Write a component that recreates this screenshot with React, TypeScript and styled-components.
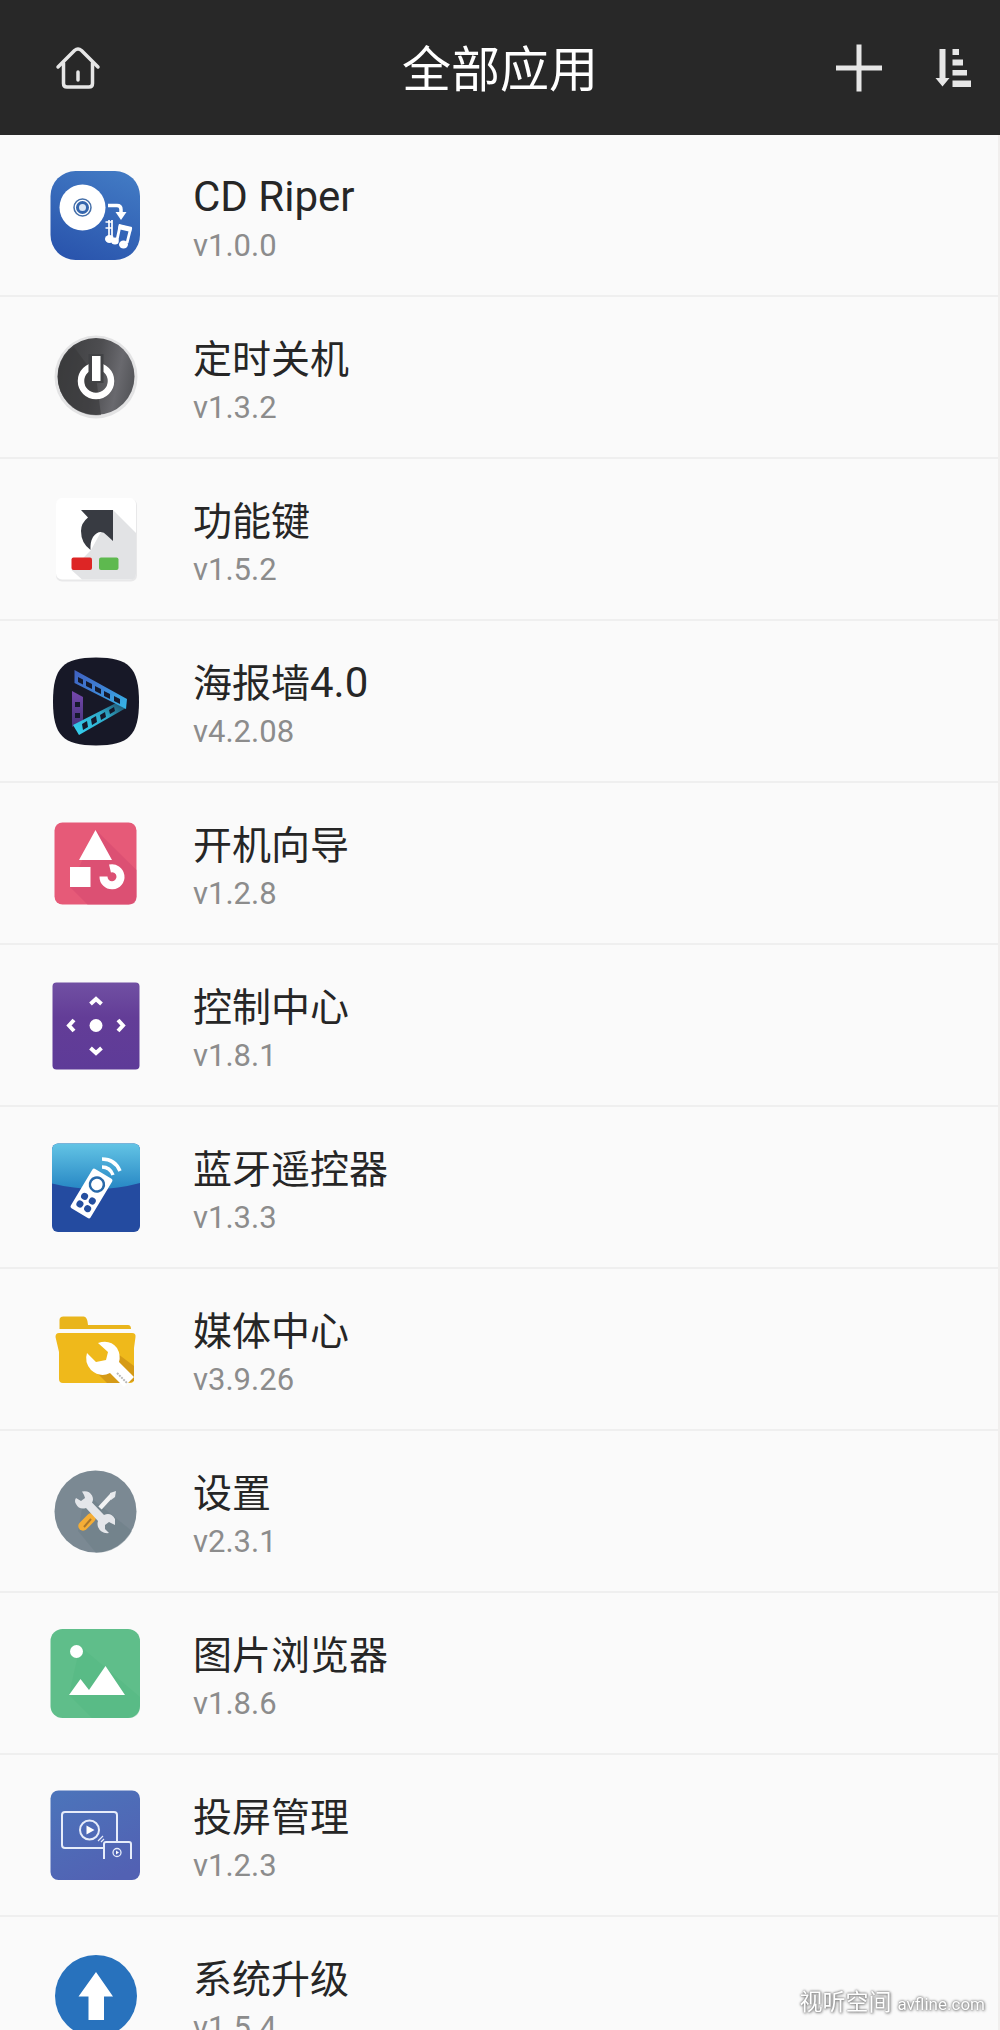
import React from "react";
import styled, { createGlobalStyle } from "styled-components";

const GlobalStyle = createGlobalStyle`
  * { box-sizing: border-box; }
  body {
    margin: 0;
    background: #fafafa;
    font-family: Roboto, "Noto Sans CJK SC", sans-serif;
  }
`;

const Screen = styled.div`
  display: flex;
  flex-direction: column;
  height: 100vh;
  overflow: hidden;
`;

const Header = styled.header`
  display: grid;
  grid-template-columns: 1fr auto 1fr;
  align-items: center;
  flex: none;
  height: 135px;
  padding: 0 19px 0 50px;
  background: #282828;
  color: #fff;
`;

const Title = styled.h1`
  margin: 0 31px 0 0;
  padding-top: 6px;
  font-size: 49px;
  font-weight: 400;
  line-height: 60px;
`;

const Actions = styled.div<{ $end?: boolean }>`
  display: flex;
  gap: 38px;
  justify-content: ${(p) => (p.$end ? "flex-end" : "flex-start")};
`;

const IconButton = styled.button`
  display: flex;
  width: 56px;
  height: 56px;
  padding: 0;
  border: 0;
  background: none;
  color: #e6e6e6;
  cursor: pointer;
`;

const AppList = styled.ul`
  flex: 1;
  min-height: 0;
  margin: 0;
  padding: 0;
  list-style: none;
  overflow-y: auto;
  scrollbar-width: none;
  border-right: 2px solid #f1efee;
`;

const AppItem = styled.li`
  border-bottom: 2px solid #efefef;
`;

const AppRow = styled.button`
  display: flex;
  align-items: center;
  gap: 53px;
  width: 100%;
  height: 160px;
  padding: 0 50px;
  border: 0;
  background: none;
  font-family: inherit;
  text-align: left;
  cursor: pointer;
`;

const AppIcon = styled.svg`
  flex: none;
  width: 90px;
  height: 90px;
`;

const AppText = styled.span`
  display: flex;
  flex-direction: column;
  padding-top: 8px;
`;

const AppName = styled.span`
  color: #262626;
  font-size: 39px;
  line-height: 54px;
`;

const Latin = styled.span`
  font-size: 42px;
  line-height: 1;
`;

const AppVersion = styled.span`
  color: #8c8c8c;
  font-size: 31px;
  line-height: 42px;
`;

const Watermark = styled.div`
  position: fixed;
  right: 15px;
  bottom: 10px;
  display: flex;
  align-items: baseline;
  gap: 6px;
  color: #fff;
  font-size: 23px;
  line-height: 32px;
  text-shadow: 0 0 2px #777, 0 0 3px #888, 1px 1px 3px #999;
  pointer-events: none;
`;

const WatermarkSite = styled.span`
  font-family: "Liberation Sans Narrow", Roboto, sans-serif;
  font-size: 17px;
`;

const HomeIcon = () => (
  <svg viewBox="0 0 56 56" fill="none" stroke="currentColor" strokeWidth="3.500" strokeLinecap="round" strokeLinejoin="round" aria-hidden="true">
    <path d="M8 27 24.500 10.500q3.500-3 7 0L48 27" />
    <path d="M13.500 23v20.500q0 3.500 3.500 3.500h22q3.500 0 3.500-3.500V23" />
    <path d="M28 32v8" />
  </svg>
);

const PlusIcon = () => (
  <svg viewBox="0 0 56 56" fill="none" stroke="currentColor" strokeWidth="5" aria-hidden="true">
    <path d="M28 4.500v47M5 28h46" />
  </svg>
);

const SortIcon = () => (
  <svg viewBox="0 0 56 56" fill="currentColor" aria-hidden="true">
    <path d="M14.500 9h6v29h4L17.500 46.500 10.500 38h4z" />
    <path d="M27.500 9h6.500v6h-6.500zM27.500 19.500H38v6H27.500zM27.500 30H42v5.500H27.500zM27.500 40.500H46V47H27.500z" />
  </svg>
);

const CdArt = () => (
  <>
    <defs>
      <linearGradient id="cd" x1="0.700" y1="0" x2="0.300" y2="1">
        <stop offset="0" stopColor="#4179c3" />
        <stop offset="1" stopColor="#2a55ad" />
      </linearGradient>
    </defs>
    <rect x="0.500" y="1" width="89.500" height="89" rx="25" fill="url(#cd)" />
    <circle cx="32.500" cy="37.500" r="23" fill="#fff" />
    <circle cx="32.500" cy="37.500" r="8.500" fill="none" stroke="#456fa9" strokeWidth="1.500" />
    <circle cx="32.500" cy="37.500" r="5" fill="#dce8f6" stroke="#3566ad" strokeWidth="3" />
    <path d="M58 35.500h9q4 0 4 4V44" fill="none" stroke="#fff" strokeWidth="3.500" />
    <path d="M65.500 42h11L71 50z" fill="#fff" />
    <path d="M59 68V50M55.500 52h7M55.500 58h7M62 50v17" fill="none" stroke="#fff" strokeWidth="1.700" />
    <ellipse cx="59.500" cy="69" rx="4.500" ry="4" fill="#fff" />
    <path d="M67 70 70 56l10.500 3L77 73" fill="none" stroke="#fff" strokeWidth="2.800" />
    <path d="m69 54 13 3-1 5-13-3z" fill="#fff" />
    <ellipse cx="65" cy="71" rx="3.800" ry="3.500" fill="#fff" />
    <ellipse cx="73.500" cy="74.500" rx="4.500" ry="4" fill="#fff" />
  </>
);

const PowerArt = () => (
  <>
    <defs>
      <linearGradient id="pw" x1="0" y1="0.300" x2="1" y2="0.500">
        <stop offset="0" stopColor="#3d3e40" />
        <stop offset="0.500" stopColor="#4d4d50" />
        <stop offset="0.800" stopColor="#69696e" />
        <stop offset="1" stopColor="#55565a" />
      </linearGradient>
    </defs>
    <circle cx="46" cy="45" r="41.500" fill="#e3e3e4" />
    <circle cx="46" cy="44.500" r="38.500" fill="url(#pw)" />
    <path d="M8 49A38 38 0 0 0 51 83L46 45 24 15A38 38 0 0 0 8 49z" fill="#38393b" opacity="0.600" />
    <circle cx="46" cy="49" r="15" fill="none" stroke="#fff" strokeWidth="6.500" />
    <rect x="38.500" y="22" width="15" height="29" fill="#414245" />
    <rect x="42" y="24" width="8.500" height="25" fill="#fff" />
  </>
);

const KeyArt = () => (
  <>
    <rect x="6" y="5" width="81" height="82.500" rx="6" fill="#e8e8e9" />
    <rect x="6" y="4" width="80" height="81.500" rx="6" fill="#fff" />
    <path d="m63 16 23 23v41q0 5.500-6 5.500H32L21.500 76l19.500-20z" fill="#e2e3e5" />
    <path d="M31 16h32v31l-6-5.500Q50 34 43 43q-3 5-2.500 13Q31 49 31 37q0-8 7-13.500z" fill="#383b42" />
    <rect x="21.500" y="63.500" width="20.500" height="12.500" rx="2" fill="#dd2525" />
    <rect x="49" y="63.500" width="19.500" height="12.500" rx="2" fill="#5eb94f" />
  </>
);

const PosterArt = () => (
  <>
    <defs>
      <linearGradient id="pt" x1="0" y1="0" x2="1" y2="1">
        <stop offset="0" stopColor="#3f5fc0" />
        <stop offset="0.500" stopColor="#3f83d6" />
        <stop offset="1" stopColor="#35b8e6" />
      </linearGradient>
      <linearGradient id="pb" x1="0" y1="1" x2="1" y2="0">
        <stop offset="0" stopColor="#36d3f2" />
        <stop offset="0.600" stopColor="#2ea9c9" />
        <stop offset="1" stopColor="#1d3f58" />
      </linearGradient>
      <linearGradient id="pl" x1="0" y1="0" x2="0" y2="1">
        <stop offset="0" stopColor="#7548ad" />
        <stop offset="1" stopColor="#453279" />
      </linearGradient>
    </defs>
    <path d="M46 1.500C79 1.500 89 12 89 45.500S79 89.500 46 89.500 3 79 3 45.500 13 1.500 46 1.500z" fill="#171827" />
    <path d="m22 35 11 6v25l-11 5z" fill="url(#pl)" />
    <path d="m23 69 45-23 8 6L29 79z" fill="url(#pb)" />
    <path d="m24.500 14 52.500 29-1 10L24.500 27z" fill="url(#pt)" />
    <g fill="#15192b">
      <path d="m28 21 5 2.500v5L28 26zM36 25l6 3v5l-6-3zM45 30l6 3v5l-6-3zM54 35l6 3v5l-6-3zM64 40l6 3v5l-6-3z" />
      <path d="M25 46h5v5h-5zM25 57h5v5h-5z" />
      <path d="m32 68 5-3 1 6-5 3zM41 63l5-3 1 6-5 3zM50 59l5-3 1 5-5 3zM59 54l5-3 1 4-5 3z" />
    </g>
  </>
);

const GuideArt = () => (
  <>
    <rect x="4.500" y="4.500" width="82" height="82" rx="8" fill="#e65a78" />
    <path d="M46 12 86.500 52v27q0 7.500-8 7.500H37.500L20 69z" fill="#d74b70" opacity="0.650" />
    <path d="m45.500 12 16.500 30H29zM20 49h20.500v20H20z" fill="#fff" />
    <path d="M60 50.500a8.500 8.500 0 1 1-6.500 8" fill="none" stroke="#fff" strokeWidth="8" />
  </>
);

const ControlArt = () => (
  <>
    <defs>
      <linearGradient id="ct" x1="0" y1="0" x2="0" y2="1">
        <stop offset="0" stopColor="#7150a3" />
        <stop offset="0.400" stopColor="#633d97" />
        <stop offset="1" stopColor="#5e3b98" />
      </linearGradient>
    </defs>
    <rect x="2.500" y="2.500" width="87" height="87" rx="4" fill="url(#ct)" />
    <circle cx="46" cy="45.500" r="6.500" fill="#fff" />
    <path d="m40.500 24 5.500-5 5.500 5M40.500 68l5.500 5 5.500-5M24 40l-5 5.500 5 5.500M68 40l5 5.500-5 5.500" fill="none" stroke="#fff" strokeWidth="4" />
  </>
);

const RemoteArt = () => (
  <>
    <defs>
      <linearGradient id="rt" x1="0" y1="0" x2="0" y2="1">
        <stop offset="0" stopColor="#65c6e6" />
        <stop offset="1" stopColor="#2787c4" />
      </linearGradient>
      <clipPath id="rc"><rect x="2" y="1.500" width="88" height="88.500" rx="6" /></clipPath>
    </defs>
    <g clipPath="url(#rc)">
      <rect width="90" height="91" fill="#244ba0" />
      <path d="M0 0h90v41Q46 53 0 41z" fill="url(#rt)" />
    </g>
    <g transform="translate(41.500 51.500) rotate(31)">
      <rect x="-11.500" y="-23" width="23" height="46" rx="2" fill="#fff" />
      <circle cy="-10.500" r="7" fill="#fff" stroke="#2869a9" strokeWidth="2.500" />
      <g fill="#254f9f">
        <circle cx="-4.500" cy="6" r="3.500" />
        <circle cx="4.500" cy="6" r="3.500" />
        <circle cx="-4.500" cy="15" r="3.500" />
        <circle cx="4.500" cy="15" r="3.500" />
      </g>
    </g>
    <path d="M52 25q8 0 11 8M52 17q13 0 18 12" fill="none" stroke="#fff" strokeWidth="3.500" />
  </>
);

const MediaArt = () => (
  <>
    <path d="M9.500 25V16q0-3.500 4-3.500h20q4 0 4.500 8.500h40q3 0 3 4z" fill="#e9b51c" />
    <path d="M9 29h73q4 0 3.500 4l-1.500 11V75q0 4-4 4H13q-4 0-4-4V48L5.500 33q0-4 3.500-4z" fill="#efb91b" />
    <path d="m68 50 16 12v15l-7 2H57L45 67z" fill="#d59a16" />
    <path d="M48 39Q60 35 67 44q4 7 2 14l15 15-10 10-14-14q-10 5-19-3-7-8-4-17l9 9 10-2 2-8z" fill="#fff" />
    <path d="m67 69 10 10" stroke="#b8b8b8" strokeWidth="2" strokeDasharray="2 1" />
  </>
);

const SettingsArt = () => (
  <>
    <circle cx="45.500" cy="45.500" r="41" fill="#7b8993" />
    <path d="M35 27 82 65A41 41 0 0 1 46 87L28 65z" fill="#6b7c85" opacity="0.450" />
    <path d="m50 42 12-13" stroke="#f2f3f4" strokeWidth="4.500" />
    <path d="m60 27 6-2-1 6-4 3z" fill="#e8eaed" />
    <path d="m41 52-8 8" stroke="#f4ad36" strokeWidth="9.500" strokeLinecap="round" />
    <path d="m41 53-7 8" stroke="#a9762c" strokeWidth="2" />
    <path d="M32 25.500q7-1.500 10 4 2 4 0 7L54 49q7-3 11 4v6l-6-3-4 3v4l4 4q-8 1-11-6-1-4 0-6L36 42q-7 2-10-4-2-3 0-6l5 3 4-3-1-3z" fill="#e4e6ea" />
  </>
);

const GalleryArt = () => (
  <>
    <rect x="0.500" y="1" width="89.500" height="89" rx="12" fill="#5fbe8a" />
    <path d="m30 18 60 51v9q0 12-12 12H42L19 67z" fill="#51b780" opacity="0.400" />
    <circle cx="26.500" cy="23.500" r="6.500" fill="#fff" />
    <path d="m19 67 11.500-16L39 62l16.500-24L75 67z" fill="#fff" />
  </>
);

const CastArt = () => (
  <>
    <defs>
      <linearGradient id="cs" x1="0.200" y1="0" x2="0.700" y2="1">
        <stop offset="0" stopColor="#4c73ba" />
        <stop offset="1" stopColor="#5261b3" />
      </linearGradient>
    </defs>
    <rect x="0.500" y="0.500" width="89.500" height="89.500" rx="8" fill="url(#cs)" />
    <g fill="none" stroke="#e6ecfa" strokeWidth="2">
      <path d="M53 58H15q-3 0-3-3V25q0-3 3-3h49q3 0 3 3v26" />
      <circle cx="39.500" cy="40" r="9.500" />
      <path d="M54 69V54q0-2 2-2h23q2 0 2 2v15" />
      <circle cx="67" cy="62.500" r="4" strokeWidth="1.300" />
      <path d="m48 51 5-5M51 52l3-3" strokeWidth="1.200" />
    </g>
    <path d="m36.500 35.500 8 4.500-8 4.500zM66 60.500l3 2-3 2z" fill="#fff" />
  </>
);

const UpgradeArt = () => (
  <>
    <circle cx="46" cy="44" r="41" fill="#2872bd" />
    <path d="m46 20 17 24.500h-9V68H38.500V44.500h-10z" fill="#fff" />
  </>
);

const apps: { name: string; latin?: string; version: string; Art: React.FC }[] = [
  { name: "", latin: "CD Riper", version: "v1.0.0", Art: CdArt },
  { name: "定时关机", version: "v1.3.2", Art: PowerArt },
  { name: "功能键", version: "v1.5.2", Art: KeyArt },
  { name: "海报墙", latin: "4.0", version: "v4.2.08", Art: PosterArt },
  { name: "开机向导", version: "v1.2.8", Art: GuideArt },
  { name: "控制中心", version: "v1.8.1", Art: ControlArt },
  { name: "蓝牙遥控器", version: "v1.3.3", Art: RemoteArt },
  { name: "媒体中心", version: "v3.9.26", Art: MediaArt },
  { name: "设置", version: "v2.3.1", Art: SettingsArt },
  { name: "图片浏览器", version: "v1.8.6", Art: GalleryArt },
  { name: "投屏管理", version: "v1.2.3", Art: CastArt },
  { name: "系统升级", version: "v1.5.4", Art: UpgradeArt },
];

export default function App() {
  return (
    <Screen lang="zh-CN">
      <GlobalStyle />
      <Header>
        <Actions>
          <IconButton type="button" aria-label="主页"><HomeIcon /></IconButton>
        </Actions>
        <Title>全部应用</Title>
        <Actions $end>
          <IconButton type="button" aria-label="添加"><PlusIcon /></IconButton>
          <IconButton type="button" aria-label="排序"><SortIcon /></IconButton>
        </Actions>
      </Header>
      <AppList>
        {apps.map(({ name, latin, version, Art }) => (
          <AppItem key={name + version}>
            <AppRow type="button">
              <AppIcon viewBox="0 0 90 90" aria-hidden="true"><Art /></AppIcon>
              <AppText>
                <AppName>
                  {name}
                  {latin && <Latin>{latin}</Latin>}
                </AppName>
                <AppVersion>{version}</AppVersion>
              </AppText>
            </AppRow>
          </AppItem>
        ))}
      </AppList>
      <Watermark>
        <span>视听空间</span>
        <WatermarkSite>avfline.com</WatermarkSite>
      </Watermark>
    </Screen>
  );
}
